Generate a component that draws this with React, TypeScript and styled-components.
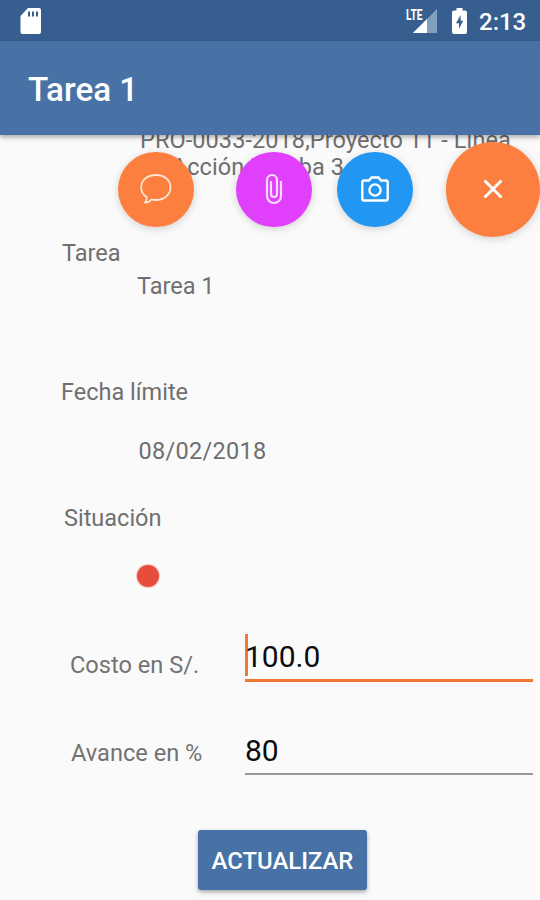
import React from "react";
import styled, { createGlobalStyle } from "styled-components";

const GlobalStyle = createGlobalStyle`
  * { box-sizing: border-box; }
  html, body { margin: 0; background: #fafafa; }
  body { font-family: Roboto, "Liberation Sans", sans-serif; }
`;

const Screen = styled.div`
  position: relative;
  display: flex;
  flex-direction: column;
  width: 540px;
  height: 900px;
  overflow: hidden;
  background: #fafafa;
`;

const StatusBar = styled.header`
  display: flex;
  align-items: center;
  flex: 0 0 41px;
  padding: 0 14px 0 20px;
  background: #365f90;
  color: #fff;
`;

const StatusIcons = styled.div`
  display: flex;
  align-items: center;
  margin-left: auto;
`;

const BatterySlot = styled.span`
  margin-left: 14px;
`;

const Clock = styled.span`
  width: 48px;
  margin-left: 11px;
  padding: 2px 0 0 1px;
  font-size: 24px;
  font-weight: 500;
  line-height: 28px;
  white-space: nowrap;
`;

const AppBar = styled.div`
  display: flex;
  align-items: center;
  flex: 0 0 94px;
  padding: 3px 28px 0;
  background: #4872a6;
  box-shadow: 0 2px 5px rgba(0, 0, 0, 0.35);
  z-index: 1;
`;

const Title = styled.h1`
  margin: 0;
  color: #fff;
  font-size: 33.2px;
  font-weight: 500;
  line-height: 40px;
`;

const Content = styled.main`
  display: flex;
  flex-direction: column;
  flex: 1;
  min-height: 0;
  overflow: hidden;
`;

const Text = styled.div<{ $left: number; $top: number; $spacing?: number }>`
  margin: ${(p) => p.$top}px 0 0 ${(p) => p.$left}px;
  color: #6f6f6f;
  font-size: 23.5px;
  line-height: 28px;
  letter-spacing: ${(p) => p.$spacing ?? 0}px;
  white-space: nowrap;
  flex-shrink: 0;
`;

const Description = styled(Text)`
  line-height: 27px;
  white-space: pre-line;
`;

const StatusDot = styled.div`
  flex: 0 0 22px;
  width: 22px;
  margin: 33px 0 0 137px;
  border-radius: 50%;
  background: #e74c3c;
  box-shadow: 0 0 1px 1px #f7c9c4;
`;

const FieldRow = styled.div<{ $top: number; $left: number }>`
  display: grid;
  grid-template-columns: ${(p) => 245 - p.$left}px 288px;
  margin: ${(p) => p.$top}px 0 0 ${(p) => p.$left}px;
  flex-shrink: 0;
`;

const FieldLabel = styled.label<{ $top: number }>`
  padding-top: ${(p) => p.$top}px;
  color: #737373;
  font-size: 23.6px;
  line-height: 28px;
`;

const Field = styled.div<{ $active?: boolean }>`
  display: flex;
  align-items: center;
  height: ${(p) => (p.$active ? 49 : 48)}px;
  border-bottom: ${(p) => (p.$active ? "3px solid #f07832" : "2px solid #999")};
  color: #0c0c0c;
  font-size: 30px;
  line-height: 36px;
  padding-top: 1px;
`;

const Caret = styled.span`
  width: 3px;
  height: 42px;
  margin: -4px -3px 0 0;
  background: #f07832;
`;

const SubmitButton = styled.button`
  flex: 0 0 60px;
  width: 169px;
  margin: 55px 0 0 198px;
  padding: 2px 0 0;
  border: 0;
  border-radius: 3px;
  background: #4872a6;
  box-shadow: 0 2px 4px rgba(0, 0, 0, 0.35);
  color: #fff;
  font: 500 23.9px/28px Roboto, "Liberation Sans", sans-serif;
  white-space: nowrap;
`;

const FabMenu = styled.nav`
  position: absolute;
  top: 142px;
  left: 118px;
  z-index: 2;
  display: grid;
  grid-template-columns: 118px 101px 108.5px 94px;
  align-items: center;
`;

const Fab = styled.button<{ $color: string; $size?: number }>`
  display: grid;
  place-items: center;
  width: ${(p) => p.$size ?? 75.5}px;
  height: ${(p) => p.$size ?? 75.5}px;
  padding: 0;
  border: 0;
  border-radius: 50%;
  background: ${(p) => p.$color};
  box-shadow: 0 2px 8px rgba(0, 0, 0, 0.16);
`;

const Icon = styled.svg`
  display: block;
  overflow: visible;
`;

const SdCardIcon = () => (
  <Icon width="21" height="26" viewBox="0 0 21 26">
    <path fill="#fff" fillRule="evenodd" d="M8 0H19Q21 0 21 2V24Q21 26 19 26H2.5Q.5 26 .5 24V8ZM8 3.5V8.5H10V3.5ZM12 3.5V8.5H14V3.5ZM16 3.5V8.5H18V3.5Z" />
  </Icon>
);

const NetworkIcon = () => (
  <Icon width="32" height="27" viewBox="0 0 32 27">
    <path d="M7 26 31 2V26Z" fill="#839fc0" />
    <path d="M7 26 21 12V26Z" fill="#fff" />
    <path d="M0 2H17V11L12 16H0Z" fill="#365f90" />
    <text x="0" y="12.5" fill="#fff" fontFamily="Roboto, sans-serif" fontSize="14.5" fontWeight="700" textLength="16.5" lengthAdjust="spacingAndGlyphs">LTE</text>
  </Icon>
);

const BatteryIcon = () => (
  <Icon width="15" height="26" viewBox="0 0 15 26">
    <path d="M4.5 0H10.5V2.5H13Q15 2.5 15 4.5V24Q15 26 13 26H2Q0 26 0 24V4.5Q0 2.5 2 2.5H4.5Z" fill="#fff" />
    <path d="M8.6 7 4 15.2H7V20.8L11.2 12.7H8.6Z" fill="#365f90" />
  </Icon>
);

const CommentIcon = () => (
  <Icon width="32" height="30" viewBox="0 0 32 30" fill="none" stroke="#ffe6d6" strokeWidth="1.8" strokeLinejoin="round">
    <path d="M16 1C7.7 1 1.2 6 1.2 13.2C1.2 17.5 3.2 21 6.8 23.1C7 25.5 6.3 27.2 5 28.7C8 28.7 10 27.3 11.5 25.5C13 25.9 14.5 26 16 26C24.3 26 30.5 20.5 30.5 13.3C30.5 6 24.3 1 16 1Z" />
  </Icon>
);

const ClipIcon = () => (
  <Icon width="18" height="32" viewBox="0 0 18 32" fill="none" stroke="#ffdcff" strokeWidth="2.2">
    <path d="M16 8V23A7 7 0 0 1 2 23V7A5 5 0 0 1 12 7V21A3 3 0 0 1 6 21V8" />
  </Icon>
);

const CameraIcon = () => (
  <Icon width="28" height="26" viewBox="0 0 28 26" fill="none" stroke="#fff" strokeWidth="2.4">
    <path d="M3 4.5H8L10.5 1.5H17.5L20 4.5H25Q26.7 4.5 26.7 6.2V22.8Q26.7 24.5 25 24.5H3Q1.3 24.5 1.3 22.8V6.2Q1.3 4.5 3 4.5Z" />
    <circle cx="14" cy="14" r="5.6" />
  </Icon>
);

const CloseIcon = () => (
  <Icon width="20" height="20" viewBox="0 0 20 20" stroke="#fff" strokeWidth="2.9">
    <path d="M1.5 1.5 18.5 18.5M18.5 1.5 1.5 18.5" />
  </Icon>
);

export default function App() {
  return (
    <Screen>
      <GlobalStyle />
      <StatusBar>
        <SdCardIcon />
        <StatusIcons>
          <NetworkIcon />
          <BatterySlot><BatteryIcon /></BatterySlot>
          <Clock>2:13</Clock>
        </StatusIcons>
      </StatusBar>
      <AppBar>
        <Title>Tarea 1</Title>
      </AppBar>
      <Content>
        <Description $left={140} $top={-8} $spacing={0.08}>{"PRO-0033-2018,Proyecto 11 - Línea\nde Acción Prueba 3"}</Description>
        <Text $left={62} $top={58}>Tarea</Text>
        <Text $left={137} $top={5}>Tarea 1</Text>
        <Text $left={61} $top={78}>Fecha límite</Text>
        <Text $left={138.5} $top={31} $spacing={0.3}>08/02/2018</Text>
        <Text $left={64} $top={39}>Situación</Text>
        <StatusDot />
        <FieldRow $top={46} $left={70}>
          <FieldLabel $top={18}>Costo en S/.</FieldLabel>
          <Field $active><Caret />100.0</Field>
        </FieldRow>
        <FieldRow $top={45} $left={71}>
          <FieldLabel $top={12}>Avance en %</FieldLabel>
          <Field>80</Field>
        </FieldRow>
        <SubmitButton>ACTUALIZAR</SubmitButton>
      </Content>
      <FabMenu>
        <Fab $color="#fc7f3f" aria-label="Comentar"><CommentIcon /></Fab>
        <Fab $color="#e040fb" aria-label="Adjuntar"><ClipIcon /></Fab>
        <Fab $color="#2196f3" aria-label="Foto"><CameraIcon /></Fab>
        <Fab $color="#fc7f3f" $size={94.5} aria-label="Cerrar"><CloseIcon /></Fab>
      </FabMenu>
    </Screen>
  );
}
